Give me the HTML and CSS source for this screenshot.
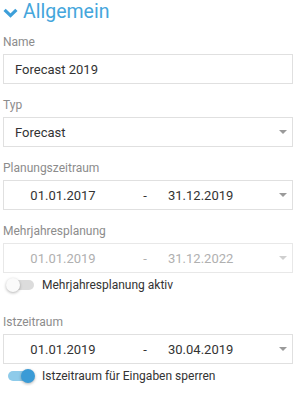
FILE: index.html
```html
<!DOCTYPE html>
<html lang="de">
<head>
    <meta charset="UTF-8">
    <meta name="viewport" content="width=device-width, initial-scale=1.0">
    <title>Allgemein</title>
    <link rel="stylesheet" href="styles.css">
</head>
<body>
    <div class="section">
        <h2 class="section-title">
            <svg class="chevron" width="15" height="10" viewBox="0 0 15 10">
                <path d="M1.6 1.8 L7.5 7.6 L13.4 1.8" fill="none" stroke="#3d9fd9" stroke-width="3.2"/>
            </svg>
            Allgemein
        </h2>

        <div class="field">
            <label>Name</label>
            <div class="box">Forecast 2019</div>
        </div>

        <div class="field">
            <label>Typ</label>
            <div class="box select">
                <span class="value">Forecast</span>
                <span class="arrow"></span>
            </div>
        </div>

        <div class="field">
            <label>Planungszeitraum</label>
            <div class="box range">
                <span class="date">01.01.2017</span>
                <span class="dash">-</span>
                <span class="date to">31.12.2019</span>
                <span class="arrow"></span>
            </div>
        </div>

        <div class="field disabled">
            <label>Mehrjahresplanung</label>
            <div class="box range">
                <span class="date">01.01.2019</span>
                <span class="dash">-</span>
                <span class="date to">31.12.2022</span>
                <span class="arrow"></span>
            </div>
        </div>
        <div class="toggle-row">
            <span class="toggle"><span class="knob"></span></span>
            <span class="toggle-label">Mehrjahresplanung aktiv</span>
        </div>

        <div class="field spaced">
            <label>Istzeitraum</label>
            <div class="box range">
                <span class="date">01.01.2019</span>
                <span class="dash">-</span>
                <span class="date to">30.04.2019</span>
                <span class="arrow"></span>
            </div>
        </div>
        <div class="toggle-row">
            <span class="toggle on"><span class="knob"></span></span>
            <span class="toggle-label">Istzeitraum für Eingaben sperren</span>
        </div>
    </div>
</body>
</html>
```

FILE: styles.css
```css
body {
    margin: 0;
    background: #fff;
    font-family: Roboto, 'Liberation Sans', Arial, sans-serif;
    color: #333;
}
.section {
    width: 290px;
    padding-left: 3px;
}
.section-title {
    display: flex;
    align-items: center;
    gap: 5px;
    margin: 0;
    padding-top: 3px;
    font-size: 19.5px;
    line-height: 18px;
    font-weight: 400;
    color: #45a6dc;
}
.chevron {
    display: block;
    margin-top: 1px;
}
.field {
    padding-top: 14px;
}
.field.spaced {
    padding-top: 20px;
}
.field label {
    display: block;
    font-size: 12px;
    line-height: 14px;
    color: #8c8c8c;
    margin-bottom: 5px;
}
.box {
    display: flex;
    align-items: center;
    box-sizing: border-box;
    height: 30px;
    border: 1px solid #e0e0e0;
    padding: 0 5px 0 11px;
    font-size: 13px;
    color: #333;
}
.select .value {
    flex: 1;
}
.range {
    padding-left: 0;
}
.range .date {
    width: 118px;
    text-align: center;
}
.range .dash {
    width: 46px;
    text-align: center;
}
.range .date.to {
    width: 62px;
}
.range .arrow {
    margin-left: auto;
}
.arrow {
    width: 0;
    height: 0;
    border-left: 4px solid transparent;
    border-right: 4px solid transparent;
    border-top: 4px solid #9a9a9a;
}
.disabled .box {
    color: #b0b0b0;
    border-color: #e8e8e8;
}
.disabled .arrow {
    border-top-color: #cfcfcf;
}
.toggle-row {
    display: flex;
    align-items: center;
    height: 20px;
    margin-top: 2px;
    font-size: 12px;
    color: #333;
}
.toggle {
    position: relative;
    width: 26px;
    height: 10px;
    margin-left: 5px;
    margin-right: 8px;
    border-radius: 5px;
    background: #dcdcdc;
}
.toggle .knob {
    position: absolute;
    top: -2px;
    left: -2px;
    width: 14px;
    height: 14px;
    border-radius: 50%;
    background: #fafafa;
    box-shadow: 0 1px 3px rgba(0,0,0,0.3);
}
.toggle.on {
    background: #8ecbea;
}
.toggle.on .knob {
    left: 13px;
    background: #3a9bd6;
}
```
